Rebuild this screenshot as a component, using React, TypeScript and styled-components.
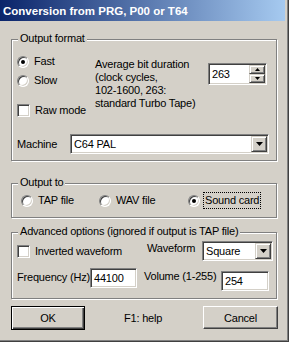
import styled, { createGlobalStyle } from 'styled-components';

const face = '#D4D0C8';
const shadow = '#808080';
const dark = '#404040';

const GlobalStyle = createGlobalStyle`
  html, body { margin: 0; padding: 0; background: ${face}; }
  body {
    font-family: "Liberation Sans", Arial, sans-serif;
    font-size: 11px;
    letter-spacing: -0.2px;
    color: #000;
  }
  * { box-sizing: border-box; }
`;

const Window = styled.div`
  width: 289px;
  height: 342px;
  background: ${face};
  border-right: 1px solid ${dark};
  border-bottom: 1px solid ${dark};
`;

const Frame = styled.div`
  height: 100%;
  border-right: 1px solid ${shadow};
  border-bottom: 1px solid ${shadow};
  padding-right: 2px;
`;

const TitleBar = styled.div`
  height: 21px;
  display: flex;
  align-items: center;
  padding-left: 3px;
  background: linear-gradient(to right, #0a246a, #a6caf0);
  color: #fff;
  font-weight: bold;
  font-size: 11.5px;
  letter-spacing: 0;
`;

const Body = styled.div`
  padding: 18px 0 0 11px;
  width: 278px;
`;

const Group = styled.div<{ $h: number; $mt?: number }>`
  position: relative;
  height: ${(p) => p.$h}px;
  margin-top: ${(p) => p.$mt ?? 0}px;
  width: 266px;
  border: 1px solid ${shadow};
  box-shadow: inset 1px 1px 0 #fff, 1px 1px 0 #fff;
`;

const Legend = styled.span`
  position: absolute;
  top: -8px;
  left: 6px;
  padding: 0 2px;
  line-height: 13px;
  background: ${face};
`;

const FormatRow = styled.div`
  display: flex;
  height: 94px;
`;

const Choices = styled.div`
  width: 83px;
  padding: 12px 0 0 5px;
`;

const OptionRow = styled.div<{ $mt?: number }>`
  display: flex;
  align-items: center;
  height: 19px;
  margin-top: ${(p) => p.$mt ?? 0}px;
`;

const Desc = styled.div`
  width: 113px;
  margin-top: 18px;
  line-height: 13px;
  white-space: nowrap;
`;

const Sunken = styled.div<{ $w: number; $h: number; $mt?: number }>`
  position: relative;
  display: flex;
  align-items: center;
  width: ${(p) => p.$w}px;
  height: ${(p) => p.$h}px;
  margin-top: ${(p) => p.$mt ?? 0}px;
  padding-left: 3px;
  background: #fff;
  border: 1px solid;
  border-color: ${shadow} #fff #fff ${shadow};
  box-shadow: inset 1px 1px 0 ${dark}, inset -1px -1px 0 ${face};
  flex-shrink: 0;
`;

const FieldText = styled.span`
  flex: 1;
  line-height: 13px;
`;

const Raised = styled.div<{ $w: number; $h: number }>`
  display: flex;
  align-items: center;
  justify-content: center;
  width: ${(p) => p.$w}px;
  height: ${(p) => p.$h}px;
  background: ${face};
  border: 1px solid;
  border-color: ${face} ${dark} ${dark} ${face};
  box-shadow: inset 1px 1px 0 #fff, inset -1px -1px 0 ${shadow};
`;

const DropButton = styled(Raised)`
  margin-right: 1px;
`;

const SpinStack = styled.div`
  display: flex;
  flex-direction: column;
  margin-right: 1px;
`;

const MachineRow = styled.div`
  display: flex;
  align-items: center;
  padding-left: 5px;
  height: 20px;
`;

const Label = styled.span<{ $w?: number; $ml?: number; $mt?: number }>`
  width: ${(p) => (p.$w ? `${p.$w}px` : 'auto')};
  margin-left: ${(p) => p.$ml ?? 0}px;
  margin-top: ${(p) => p.$mt ?? 0}px;
  line-height: 13px;
  white-space: nowrap;
  flex-shrink: 0;
`;

const RadioCircle = styled.span<{ $on?: boolean }>`
  display: inline-flex;
  align-items: center;
  justify-content: center;
  width: 12px;
  height: 12px;
  border-radius: 50%;
  background: #fff;
  border: 1px solid;
  border-color: ${shadow} #fff #fff ${shadow};
  box-shadow: inset 1px 1px 0 ${dark}, inset -1px -1px 0 ${face};
  flex-shrink: 0;
  &::after {
    content: '';
    display: ${(p) => (p.$on ? 'block' : 'none')};
    width: 4px;
    height: 4px;
    border-radius: 50%;
    background: #000;
  }
`;

const CheckBox = styled.span`
  display: inline-block;
  width: 13px;
  height: 13px;
  background: #fff;
  border: 1px solid;
  border-color: ${shadow} #fff #fff ${shadow};
  box-shadow: inset 1px 1px 0 ${dark}, inset -1px -1px 0 ${face};
  flex-shrink: 0;
`;

const OptText = styled.span<{ $focus?: boolean }>`
  margin-left: ${(p) => (p.$focus ? 3 : 5)}px;
  padding: 1px ${(p) => (p.$focus ? 1 : 0)}px;
  border: ${(p) => (p.$focus ? '1px dotted #000' : 'none')};
  line-height: 13px;
  white-space: nowrap;
`;

const OutputRow = styled.div`
  display: flex;
  align-items: center;
  height: 17px;
  margin: 8px 0 0 9px;
`;

const OutputItem = styled.div<{ $w?: number }>`
  display: flex;
  align-items: center;
  width: ${(p) => (p.$w ? `${p.$w}px` : 'auto')};
`;

const AdvRow = styled.div<{ $mt: number }>`
  display: flex;
  align-items: flex-start;
  padding-left: 5px;
  margin-top: ${(p) => p.$mt}px;
`;

const AdvCheck = styled.div`
  display: flex;
  align-items: center;
  width: 130px;
  height: 20px;
`;

const ButtonRow = styled.div`
  display: flex;
  align-items: flex-start;
  width: 267px;
  margin-top: 7px;
`;

const PushButton = styled.button<{ $default?: boolean; $w: number; $h: number }>`
  width: ${(p) => p.$w}px;
  height: ${(p) => p.$h}px;
  padding: 0;
  font: inherit;
  letter-spacing: inherit;
  color: #000;
  background: ${face};
  border: 1px solid;
  border-color: ${(p) => (p.$default ? '#000' : `#fff ${dark} ${dark} #fff`)};
  box-shadow: ${(p) =>
    p.$default
      ? `inset 1px 1px 0 #fff, inset -1px -1px 0 ${dark}, inset -2px -2px 0 ${shadow}`
      : `inset -1px -1px 0 ${shadow}`};
`;

const Help = styled.span`
  margin: 6px 0 0 39px;
  line-height: 13px;
`;

const Spacer = styled.div`
  flex: 1;
`;

const DownArrow = () => (
  <svg width="7" height="4" viewBox="0 0 7 4">
    <polygon points="0,0 7,0 3.5,4" fill="#000" />
  </svg>
);

const TinyArrow = ({ up }: { up?: boolean }) => (
  <svg width="5" height="3" viewBox="0 0 5 3">
    <polygon points={up ? '2.5,0 5,3 0,3' : '0,0 5,0 2.5,3'} fill="#000" />
  </svg>
);

const Combo = ({ value, w, h }: { value: string; w: number; h: number }) => (
  <Sunken $w={w} $h={h}>
    <FieldText>{value}</FieldText>
    <DropButton $w={16} $h={h - 4}>
      <DownArrow />
    </DropButton>
  </Sunken>
);

export default function App() {
  return (
    <>
      <GlobalStyle />
      <Window>
        <Frame>
          <TitleBar>Conversion from PRG, P00 or T64</TitleBar>
          <Body>
            <Group $h={122}>
              <Legend>Output format</Legend>
              <FormatRow>
                <Choices>
                  <OptionRow>
                    <RadioCircle $on />
                    <OptText>Fast</OptText>
                  </OptionRow>
                  <OptionRow>
                    <RadioCircle />
                    <OptText>Slow</OptText>
                  </OptionRow>
                  <OptionRow $mt={11}>
                    <CheckBox />
                    <OptText>Raw mode</OptText>
                  </OptionRow>
                </Choices>
                <Desc>
                  Average bit duration
                  <br />
                  (clock cycles,
                  <br />
                  102-1600, 263:
                  <br />
                  standard Turbo Tape)
                </Desc>
                <Sunken $w={59} $h={22} $mt={23}>
                  <FieldText>263</FieldText>
                  <SpinStack>
                    <Raised $w={16} $h={9}>
                      <TinyArrow up />
                    </Raised>
                    <Raised $w={16} $h={9}>
                      <TinyArrow />
                    </Raised>
                  </SpinStack>
                </Sunken>
              </FormatRow>
              <MachineRow>
                <Label $w={53}>Machine</Label>
                <Combo value="C64 PAL" w={199} h={20} />
              </MachineRow>
            </Group>

            <Group $h={35} $mt={22}>
              <Legend>Output to</Legend>
              <OutputRow>
                <OutputItem $w={78}>
                  <RadioCircle />
                  <OptText>TAP file</OptText>
                </OutputItem>
                <OutputItem $w={89}>
                  <RadioCircle />
                  <OptText>WAV file</OptText>
                </OutputItem>
                <OutputItem>
                  <RadioCircle $on />
                  <OptText $focus>Sound card</OptText>
                </OutputItem>
              </OutputRow>
            </Group>

            <Group $h={67} $mt={14}>
              <Legend>Advanced options (ignored if output is TAP file)</Legend>
              <AdvRow $mt={8}>
                <AdvCheck>
                  <CheckBox />
                  <OptText>Inverted waveform</OptText>
                </AdvCheck>
                <Label $w={55} $mt={1}>
                  Waveform
                </Label>
                <Combo value="Square" w={71} h={20} />
              </AdvRow>
              <AdvRow $mt={7}>
                <Label $w={73} $mt={3}>
                  Frequency (Hz)
                </Label>
                <Sunken $w={47} $h={20}>
                  <FieldText>44100</FieldText>
                </Sunken>
                <Label $w={77} $ml={7} $mt={2}>
                  Volume (1-255)
                </Label>
                <Sunken $w={48} $h={20} $mt={3}>
                  <FieldText>254</FieldText>
                </Sunken>
              </AdvRow>
            </Group>

            <ButtonRow>
              <PushButton $default $w={74} $h={24}>
                OK
              </PushButton>
              <Help>F1: help</Help>
              <Spacer />
              <PushButton $w={75} $h={23}>
                Cancel
              </PushButton>
            </ButtonRow>
          </Body>
        </Frame>
      </Window>
    </>
  );
}
